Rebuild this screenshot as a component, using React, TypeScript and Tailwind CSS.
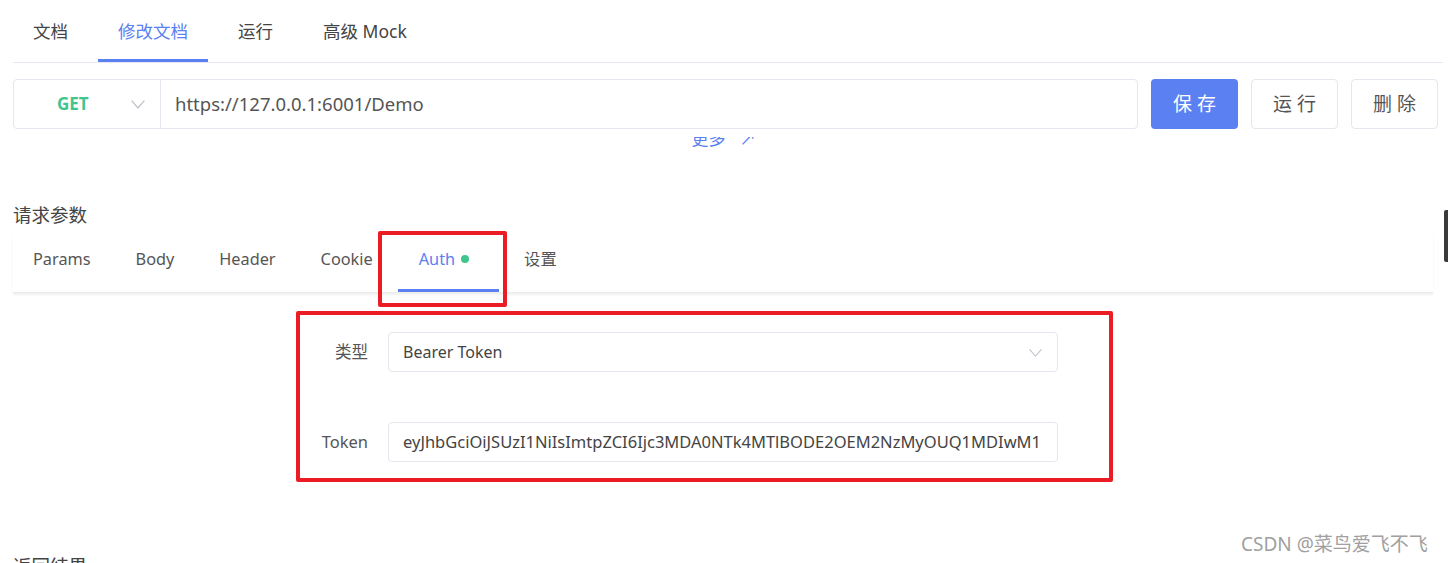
import React from 'react'

const font = { fontFamily: '"Noto Sans", "Noto Sans CJK SC", sans-serif' }

function Chevron({ className }: { className?: string }) {
  return (
    <svg className={className} viewBox="0 0 16 16" fill="none" stroke="currentColor" strokeWidth={1.2}>
      <path d="M2 5l6 7 6-7" strokeLinecap="round" strokeLinejoin="round" />
    </svg>
  )
}

const topTabs = ['文档', '修改文档', '运行', '高级 Mock']
const paramTabs = ['Params', 'Body', 'Header', 'Cookie', 'Auth', '设置']

export default function App() {
  return (
    <div className="relative w-[1448px] h-[563px] overflow-hidden bg-white pl-[13px] pr-[5px] text-[#444]" style={font}>
      {/* top tabs */}
      <div className="flex gap-[10px] h-[63px] border-b border-[#e4e7ed]">
        {topTabs.map((t, i) => (
          <div
            key={t}
            className={`px-[20px] flex items-center text-[17.5px] pt-[3px] border-b-[3px] ${i === 1 ? 'text-[#5b80f2] border-[#5b80f2]' : 'border-transparent text-[#444]'}`}
          >
            {t}
          </div>
        ))}
      </div>

      {/* url row */}
      <div className="flex mt-[16px] gap-[13px] pr-[5px]">
        <div className="flex flex-1 h-[50px] border border-[#e4e7ed] rounded-[4px]">
          <div className="w-[147px] flex items-center border-r border-[#e4e7ed] shrink-0">
            <span className="ml-[43px] text-[17px] font-bold text-[#3fc68f]">GET</span>
            <Chevron className="ml-auto mr-[14px] w-[16px] h-[16px] text-[#c0c4cc]" />
          </div>
          <div className="flex items-center pl-[14px] text-[18.5px] text-[#555]">https://127.0.0.1:6001/Demo</div>
        </div>
        <button className="w-[87px] h-[50px] rounded-[4px] bg-[#5b80f2] text-white text-[19px] tracking-[5px] pl-[5px]">保存</button>
        <button className="w-[87px] h-[50px] rounded-[4px] border border-[#e4e7ed] text-[#555] text-[19px] tracking-[5px] pl-[5px]">运行</button>
        <button className="w-[87px] h-[50px] rounded-[4px] border border-[#e4e7ed] text-[#555] text-[19px] tracking-[5px] pl-[5px]">删除</button>
      </div>

      {/* "更多" link, mostly hidden under the row above */}
      <div className="mt-[8px] h-[12px] overflow-hidden flex justify-center pr-[8px]">
        <span className="block text-[17px] leading-[18px] -mt-[7px] text-[#5b80f2] whitespace-nowrap">
          更多<span className="inline-block ml-[14px]">↗</span>
        </span>
      </div>

      <div className="mt-[54px] text-[18.5px] leading-[24px] text-[#444]">请求参数</div>

      {/* param tabs */}
      <div className="flex gap-[5px] h-[62px] mt-[4px] mr-[10px] shadow-[0_2px_2px_rgba(0,0,0,0.06)] border-b border-[#ececec]">
        {paramTabs.map(t => (
          <div
            key={t}
            className={`flex items-center text-[16.3px] pb-[2px] border-b-[3px] ${t === 'Auth' ? 'pl-[21px] pr-[30px] text-[#5b80f2] border-[#5b80f2]' : 'px-[20px] border-transparent text-[#555]'}`}
          >
            {t}
            {t === 'Auth' && <span className="ml-[6px] w-[8px] h-[8px] rounded-full bg-[#3fc68f]" />}
          </div>
        ))}
      </div>

      {/* auth form */}
      <div className="mt-[39px] flex flex-col gap-[50px]">
        <div className="flex items-center">
          <div className="w-[375px] text-right pr-[20px] text-[16.5px] text-[#555]">类型</div>
          <div className="w-[670px] h-[40px] border border-[#e4e7ed] rounded-[4px] flex items-center pl-[14px] pr-[14px] text-[16px] text-[#444]">
            Bearer Token
            <Chevron className="ml-auto w-[15px] h-[15px] text-[#c0c4cc]" />
          </div>
        </div>
        <div className="flex items-center">
          <div className="w-[375px] text-right pr-[20px] text-[16.5px] text-[#555]">Token</div>
          <div className="w-[670px] h-[40px] border border-[#e4e7ed] rounded-[4px] flex items-center pl-[14px] pr-[14px] overflow-hidden whitespace-nowrap text-[16.5px] text-[#444]">
            eyJhbGciOiJSUzI1NiIsImtpZCI6Ijc3MDA0NTk4MTlBODE2OEM2NzMyOUQ1MDIwM1
          </div>
        </div>
      </div>

      <div className="mt-[92px] text-[18.5px] leading-[24px] text-[#444]">返回结果</div>

      {/* annotation boxes */}
      <div className="absolute left-[378px] top-[231px] w-[129px] h-[76px] border-[4px] border-[#ec1c24] rounded-[2px]" />
      <div className="absolute left-[296px] top-[311px] w-[817px] h-[171px] border-[4px] border-[#ec1c24] rounded-[2px]" />

      {/* scroll handle */}
      <div className="absolute left-[1444px] top-[210px] w-[4px] h-[52px] bg-[#3a3a3a] rounded-l-[2px]" />

      {/* watermark */}
      <div className="absolute left-[1241px] top-[530px] text-[19px] text-[#a0a0a0]" style={font}>CSDN @菜鸟爱飞不飞</div>
    </div>
  )
}
